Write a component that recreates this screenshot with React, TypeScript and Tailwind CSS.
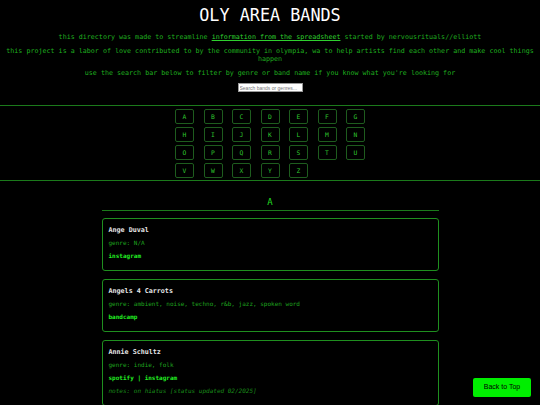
import React, { useState } from 'react';

interface Band {
  name: string;
  genre: string;
  links: string[];
  notes?: string;
}

const letters = 'ABCDEFGHIJKLMNOPQRSTUVWXYZ'.split('');

const bands: Band[] = [
  { name: 'Ange Duval', genre: 'N/A', links: ['instagram'] },
  { name: 'Angels 4 Carrots', genre: 'ambient, noise, techno, r&b, jazz, spoken word', links: ['bandcamp'] },
  { name: 'Annie Schultz', genre: 'indie, folk', links: ['spotify', 'instagram'], notes: 'on hiatus [status updated 02/2025]' },
];

const BandCard: React.FC<{ band: Band }> = ({ band }) => (
  <div className="border border-[#1f8f1f] rounded-[3px] px-[6px] pt-[7px] pb-[5px]">
    <p className="text-[6.7px] leading-[8px] font-bold text-[#e8e8e8] mb-[5px]">{band.name}</p>
    <p className="text-[6px] leading-[8px] text-[#1fa31f] mb-[5px]">genre: {band.genre}</p>
    <p className="text-[6px] leading-[8px] font-bold text-[#22ee22] mb-[5px]">
      {band.links.map((l, i) => (
        <React.Fragment key={l}>
          {i > 0 && <span> | </span>}
          <a href="#">{l}</a>
        </React.Fragment>
      ))}
    </p>
    {band.notes && (
      <p className="text-[6px] leading-[8px] italic text-[#1a8f1a] mb-[5px]">notes: {band.notes}</p>
    )}
  </div>
);

const App: React.FC = () => {
  const [query, setQuery] = useState('');

  return (
    <div className="min-h-screen bg-black font-['DejaVu_Sans_Mono',monospace] pb-[40px]">
      <header className="pt-[5px] px-[4px] text-center text-[6.7px] leading-[8px] text-[#1fae1f]">
        <h1 className="text-[16.8px] leading-[20px] text-white">OLY AREA BANDS</h1>
        <p className="mt-[8px]">
          this directory was made to streamline{' '}
          <a href="#" className="underline text-[#2fd02f]">information from the spreadsheet</a> started by
          nervousrituals//elliott
        </p>
        <p className="mt-[6px]">
          this project is a labor of love contributed to by the community in olympia, wa to help artists find each
          other and make cool things happen
        </p>
        <p className="mt-[6px]">use the search bar below to filter by genre or band name if you know what you're looking for</p>
        <input
          value={query}
          onChange={(e) => setQuery(e.target.value)}
          placeholder="Search bands or genres..."
          className="block mx-auto mt-[6px] w-[65px] h-[9px] bg-white border border-[#999] px-[1px] text-[5px] leading-[7px] text-black placeholder:text-[#777] font-['Liberation_Sans',sans-serif] outline-none"
        />
      </header>

      <nav className="mt-[13px] border-t border-b border-[#1b7a1b] pt-[3px] pb-[2px]">
        <div className="mx-auto w-[190px] grid grid-cols-[repeat(7,19px)] gap-x-[9.5px] gap-y-[3px]">
          {letters.map((l) => (
            <a
              key={l}
              href={`#${l}`}
              className="h-[15px] flex items-center justify-center border border-[#1e5c1e] rounded-[2px] text-[6.3px] text-[#2fc62f]"
            >
              {l}
            </a>
          ))}
        </div>
      </nav>

      <main className="mx-auto w-[337px]">
        <h2 className="mt-[16px] text-center text-[9px] leading-[11px] text-[#22dd22] pb-[2px] border-b border-[#1b7a1b]">
          A
        </h2>
        <div className="flex flex-col gap-[8px] mt-[7px]">
          {bands.map((b) => (
            <BandCard key={b.name} band={b} />
          ))}
        </div>
      </main>

      <button className="fixed right-[9px] bottom-[8px] w-[58px] h-[19px] rounded-[2px] bg-[#00ee00] text-black text-[7px] font-['Liberation_Sans',sans-serif]">
        Back to Top
      </button>
    </div>
  );
};

export default App;
